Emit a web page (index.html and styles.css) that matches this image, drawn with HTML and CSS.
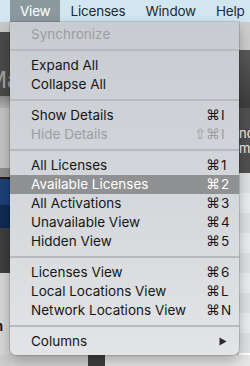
FILE: index.html
```html
<!DOCTYPE html>
<html>
<head>
<meta charset="utf-8">
<link rel="stylesheet" href="styles.css">
</head>
<body>
<div class="screen">
  <div class="menubar">
    <span class="mb-item active">View</span>
    <span class="mb-item">Licenses</span>
    <span class="mb-item">Window</span>
    <span class="mb-item">Help</span>
  </div>
  <div class="backdrop">
    <div class="col col-left">
      <div class="band l1"></div>
      <div class="band l2"><span class="big-ma">Ma</span></div>
      <div class="band l3"></div>
      <div class="band l4"></div>
      <div class="band l5"></div>
      <div class="band l6"></div>
      <div class="band l7"></div>
      <div class="band l8"></div>
      <div class="band l9"></div>
      <div class="band l10"><span class="cut-n">n</span></div>
      <div class="band l11"></div>
    </div>
    <div class="col col-mid">
      <div class="band m1"></div>
      <div class="bottom-strip">
        <div class="bs-left"></div>
        <div class="bs-bar"></div>
        <div class="bs-right"></div>
      </div>
    </div>
    <div class="col col-right">
      <div class="band r1"></div>
      <div class="band r2"></div>
      <div class="band r3"><span class="rt">nd</span><span class="rt">m</span></div>
      <div class="band r4">
        <div class="row a"></div><div class="row b"></div><div class="row a"></div><div class="row b"></div><div class="row a"></div><div class="row b"></div><div class="row a"></div><div class="row b"></div><div class="row a"></div>
      </div>
      <div class="band r5"></div>
    </div>
  </div>

  <div class="menu">
    <div class="item disabled"><span class="label">Synchronize</span></div>
    <div class="sep"></div>
    <div class="item"><span class="label">Expand All</span></div>
    <div class="item"><span class="label">Collapse All</span></div>
    <div class="sep"></div>
    <div class="item"><span class="label">Show Details</span><span class="sc"><span class="mod">⌘</span><span class="key">I</span></span></div>
    <div class="item disabled"><span class="label">Hide Details</span><span class="sc"><span class="mod">⇧⌘</span><span class="key">I</span></span></div>
    <div class="sep"></div>
    <div class="item"><span class="label">All Licenses</span><span class="sc"><span class="mod">⌘</span><span class="key">1</span></span></div>
    <div class="item selected"><span class="label">Available Licenses</span><span class="sc"><span class="mod">⌘</span><span class="key">2</span></span></div>
    <div class="item"><span class="label">All Activations</span><span class="sc"><span class="mod">⌘</span><span class="key">3</span></span></div>
    <div class="item"><span class="label">Unavailable View</span><span class="sc"><span class="mod">⌘</span><span class="key">4</span></span></div>
    <div class="item"><span class="label">Hidden View</span><span class="sc"><span class="mod">⌘</span><span class="key">5</span></span></div>
    <div class="sep"></div>
    <div class="item"><span class="label">Licenses View</span><span class="sc"><span class="mod">⌘</span><span class="key">6</span></span></div>
    <div class="item"><span class="label">Local Locations View</span><span class="sc"><span class="mod">⌘</span><span class="key">L</span></span></div>
    <div class="item"><span class="label">Network Locations View</span><span class="sc"><span class="mod">⌘</span><span class="key">N</span></span></div>
    <div class="sep"></div>
    <div class="item"><span class="label">Columns</span><svg class="arrow" width="8" height="9" viewBox="0 0 8 9"><path d="M0.5 0.5 L7.5 4.5 L0.5 8.5 Z" fill="#2a2a2a"/></svg></div>
  </div>
</div>
</body>
</html>
```
FILE: styles.css
```css
html, body {
  margin: 0;
  padding: 0;
}
body {
  width: 250px;
  height: 366px;
  overflow: hidden;
  font-family: Inter, "DejaVu Sans", sans-serif;
  -webkit-font-smoothing: antialiased;
}
.screen {
  position: relative;
  width: 250px;
  height: 366px;
  overflow: hidden;
}
.menubar {
  display: flex;
  height: 22px;
  padding-left: 10px;
  background: #d1e6f0;
  overflow: hidden;
}
.mb-item {
  padding: 0 10px;
  line-height: 22px;
  font-size: 13.5px;
  letter-spacing: -0.2px;
  color: #1f2b31;
  white-space: nowrap;
}
.mb-item:first-child { padding: 0 10px 0 10px; }
.mb-item.active {
  background: #8b989e;
  color: #ffffff;
}
.backdrop {
  display: flex;
  height: 344px;
}
.col {
  display: flex;
  flex-direction: column;
  overflow: hidden;
}
.col-left { width: 10px; }
.col-mid { flex: 1; }
.col-right { width: 11px; }
.band { flex: none; overflow: hidden; position: relative; }

.l1 { height: 10px; background: #c9c9c9; }
.l2 { height: 64px; background: #4b4b4b; }
.l3 { height: 12px; background: linear-gradient(#8a8a8a, #b5b5b5); }
.l4 { height: 60px; background: #c3c3c3; }
.l5 { height: 9px; background: #8f8f8f; }
.l6 { height: 2px; background: #1e1e1e; }
.l7 { height: 26px; background: #1e4077; }
.l8 { height: 23px; background: #102a52; }
.l9 { height: 45px; background: #3e3e3e; }
.l10 { height: 82px; background: #d7d7d7; }
.l11 { height: 11px; background: #cfcfcf; }

.big-ma {
  display: block;
  margin-top: 36px;
  margin-left: -13px;
  font-family: "Liberation Sans", sans-serif;
  font-size: 24px;
  line-height: 24px;
  color: #a3a3a3;
  white-space: nowrap;
}
.cut-n {
  display: block;
  margin-top: 46px;
  margin-left: -5px;
  font-size: 13px;
  font-weight: 700;
  line-height: 14px;
  color: #111;
}

.m1 { flex: 1; background: #c8c8c8; }
.bottom-strip { display: flex; height: 11px; flex: none; }
.bs-left { width: 78px; background: #d3d3d3; }
.bs-bar { width: 17px; background: #3f3f3f; }
.bs-right { flex: 1; background: #e7e7e7; }

.r1 { height: 28px; background: #cdcdcd; }
.r2 { height: 58px; background: linear-gradient(#5a5a5a, #3d3d3d); }
.r3 {
  height: 65px;
  background: #505050;
  display: flex;
  flex-direction: column;
  padding-top: 18px;
  box-sizing: border-box;
}
.rt {
  font-size: 13px;
  line-height: 15px;
  color: #f2f2f2;
  white-space: nowrap;
}
.r4 { height: 182px; display: flex; flex-direction: column; }
.row { height: 20px; flex: none; }
.row.a { background: #dfe1e3; }
.row.b { background: #eaeced; }
.r5 { height: 11px; background: #e6e6e6; }

.menu {
  position: absolute;
  left: 10px;
  top: 22px;
  width: 229px;
  padding: 3px 0 4px;
  background: linear-gradient(#c8cbcf 0%, #d2d5d9 45%, #e2e4e7 100%);
  border-radius: 0 0 6px 6px;
  box-shadow: 0 0 0 0.5px rgba(0, 0, 0, 0.25), 0 6px 14px rgba(0, 0, 0, 0.28);
  font-size: 13.5px;
  color: #161616;
}
.item {
  display: flex;
  align-items: center;
  height: 19px;
  line-height: 19px;
  padding: 0 9px 0 21px;
}
.item .label { flex: 1; white-space: nowrap; }
.item.disabled { color: #9b9ea1; }
.item.selected { background: #8f9192; color: #ffffff; }
.sc { display: flex; }
.mod {
  text-align: right;
  font-family: "DejaVu Sans", sans-serif;
  font-size: 14px;
  margin-right: 1px;
}
.key { width: 9px; }
.sep {
  height: 12px;
  display: flex;
  align-items: center;
}
.sep::before {
  content: "";
  flex: 1;
  height: 2px;
  background: #b8bbbe;
}
.arrow { margin-right: 3px; }
```
